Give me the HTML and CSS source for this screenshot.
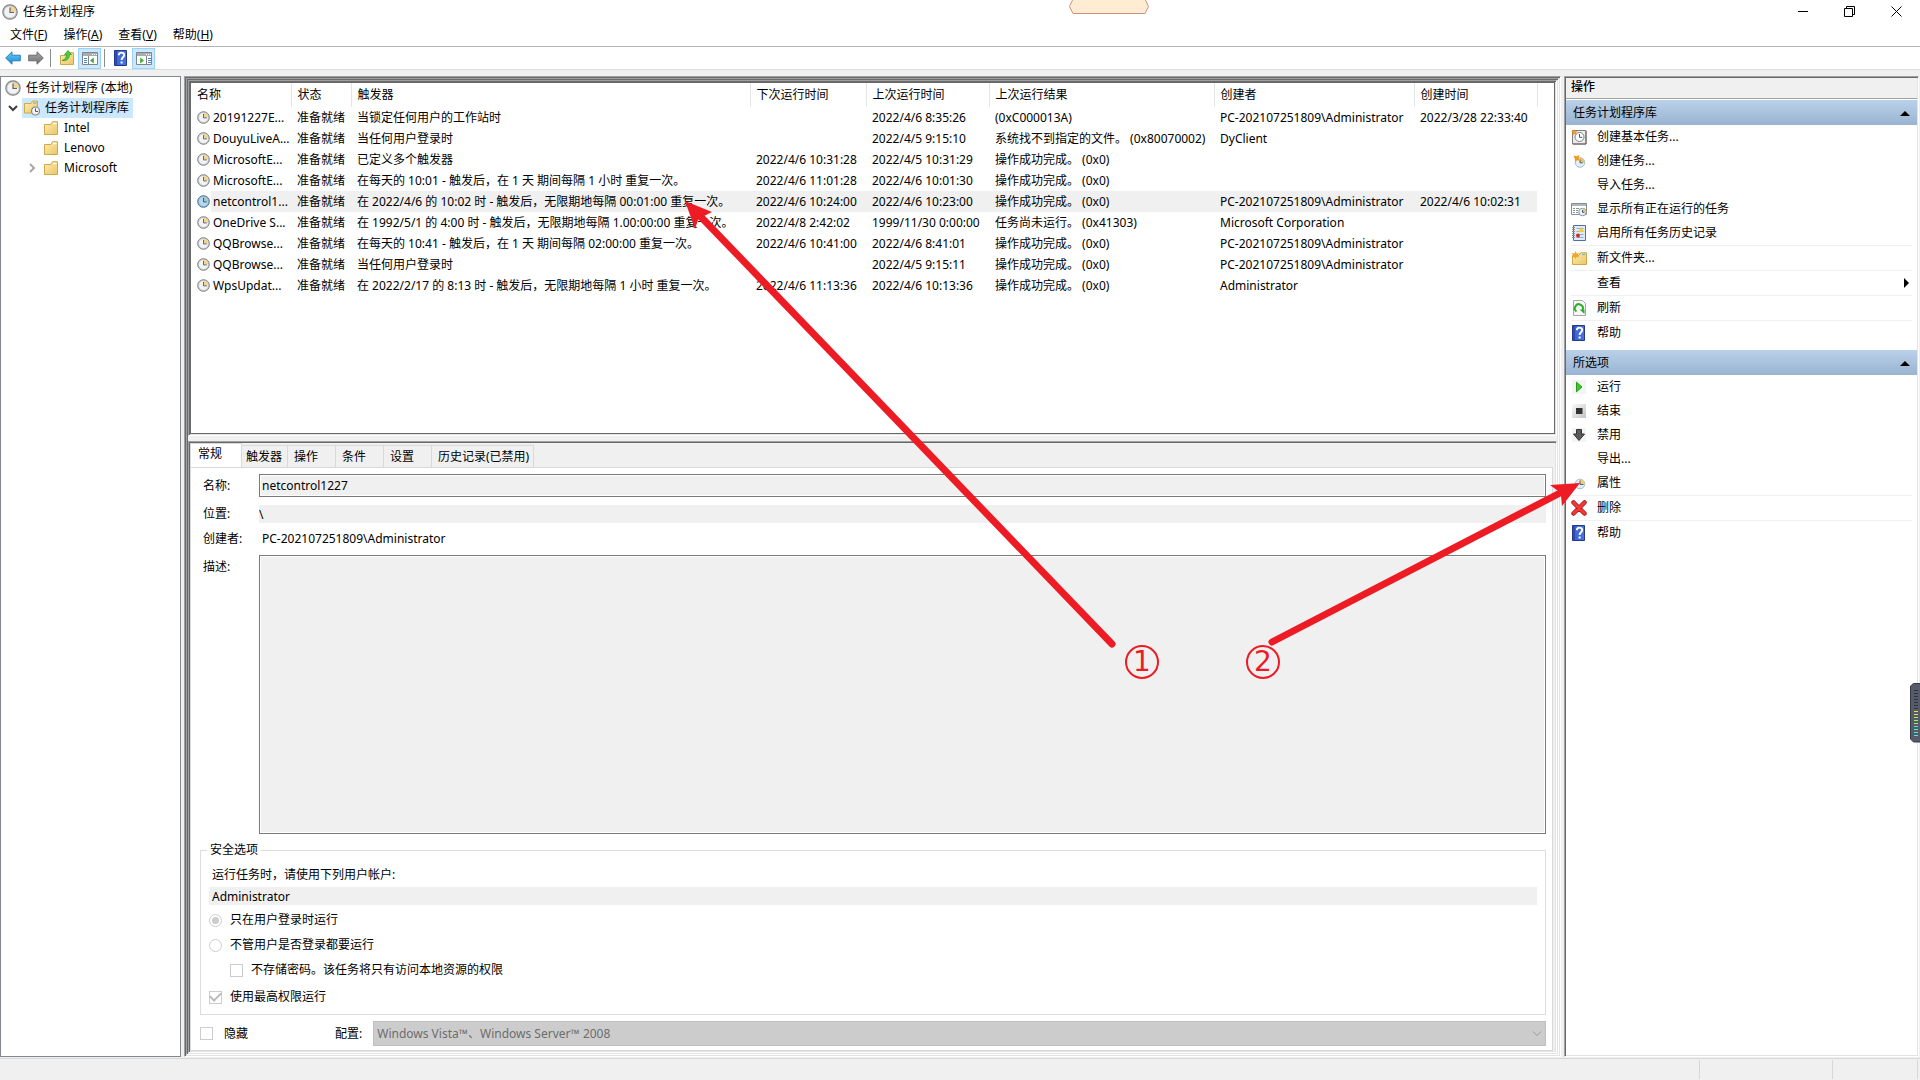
FILE: index.html
```html
<!DOCTYPE html>
<html lang="zh-CN">
<head>
<meta charset="utf-8">
<title>任务计划程序</title>
<link rel="stylesheet" href="styles.css">
</head>
<body>
<svg class="sprite" aria-hidden="true">
  <defs>
    <linearGradient id="gFolder" x1="0" y1="0" x2="1" y2="1"><stop offset="0" stop-color="#ffeeb0"/><stop offset="1" stop-color="#e9c56a"/></linearGradient>
    <linearGradient id="gBook" x1="0" y1="0" x2="1" y2="0"><stop offset="0" stop-color="#2443a8"/><stop offset=".25" stop-color="#3f66d4"/><stop offset="1" stop-color="#4a74dc"/></linearGradient>
    <linearGradient id="gBack" x1="0" y1="0" x2="0" y2="1"><stop offset="0" stop-color="#6fd0fa"/><stop offset="1" stop-color="#1487d6"/></linearGradient>
    <linearGradient id="gFwd" x1="0" y1="0" x2="0" y2="1"><stop offset="0" stop-color="#a8a8a8"/><stop offset="1" stop-color="#707070"/></linearGradient>
    <linearGradient id="gStop" x1="0" y1="0" x2="1" y2="1"><stop offset="0" stop-color="#fafafa"/><stop offset="1" stop-color="#c4c4c4"/></linearGradient>
  </defs>
  <symbol id="clock" viewBox="0 0 16 16"><circle cx="8" cy="8" r="7.2" fill="#c9c9c9" stroke="#858585" stroke-width="1.2"/><circle cx="8" cy="8" r="5.6" fill="#f1f4f7"/><path d="M8 8V2.4A5.6 5.6 0 0 1 13.6 8z" fill="#f3d48a"/><path d="M8 3.6V8.5H12" fill="none" stroke="#5c6570" stroke-width="1.2"/></symbol>
  <symbol id="clock-blue" viewBox="0 0 16 16"><circle cx="8" cy="8" r="7.2" fill="#8fb4d2" stroke="#557795" stroke-width="1.2"/><circle cx="8" cy="8" r="5.6" fill="#b5d9f2"/><path d="M8 8V2.4A5.6 5.6 0 0 1 13.6 8z" fill="#a9c7bd"/><path d="M8 3.6V8.5H12" fill="none" stroke="#2c5c83" stroke-width="1.2"/></symbol>
  <symbol id="folder" viewBox="0 0 16 16"><path d="M1.5 4.5H8l1.5-2.8h5v12.8h-13z" fill="url(#gFolder)" stroke="#d0a848"/><path d="M10 3.5h3.5" stroke="#fff" stroke-width="1.4"/></symbol>
  <symbol id="folder-clock" viewBox="0 0 16 16"><path d="M.5 3.5H7L8.500 1h5v12H.5z" fill="url(#gFolder)" stroke="#d0a848"/><path d="M9 3h3.500" stroke="#68b5e8" stroke-width="1.2"/><circle cx="11.500" cy="11" r="4" fill="#f3f3f3" stroke="#858585" stroke-width="1.2"/><path d="M11.500 8.500v3H14" fill="none" stroke="#556"/></symbol>
  <symbol id="folder-up" viewBox="0 0 16 16"><path d="M1.500 5.500H9l1.500-2.800h4v11.800h-13z" fill="url(#gFolder)" stroke="#d0a848"/><path d="M3 10.500C6.500 9.500 7.500 7 7.500 4.500H5.500L9 .5l3.500 4h-2C10.500 8.500 7.500 11.500 3 10.500z" fill="#4ecb3a" stroke="#2a9a20" stroke-width=".7"/></symbol>
  <symbol id="folder-new" viewBox="0 0 16 16"><path d="M1.500 5.500H8l1.500-2.800h6v11.800h-14z" fill="url(#gFolder)" stroke="#d0a848"/><path d="M11 4.500h3" stroke="#68b5e8" stroke-width="1.200"/><path d="M4.500 1l1.200 2.500L8.500 3 6.500 5.200 8.500 7.500 5.500 7 4.500 9.500 3.500 7 .5 7.500l2-2.300L.5 3l3 .5z" fill="#f7a51c"/></symbol>
  <symbol id="back" viewBox="0 0 16 16"><path d="M.7 8 7 1.800V5.200h8.300v5.600H7v3.400z" fill="url(#gBack)" stroke="#2c7eb8"/></symbol>
  <symbol id="forward" viewBox="0 0 16 16"><path d="M15.300 8 9 1.800V5.200H.7v5.600H9v3.400z" fill="url(#gFwd)" stroke="#6a6a6a"/></symbol>
  <symbol id="help" viewBox="0 0 16 16"><path d="M1.500.5h12v15h-12z" fill="url(#gBook)" stroke="#24388a"/><path d="M3.500.5v15" stroke="#2a48b0"/><path d="M5.800 5.200C5.800 1.700 11.200 1.800 11.200 5 11.200 7.300 8.600 7.300 8.600 10" fill="none" stroke="#fff" stroke-width="1.900"/><path d="M7.600 11.500h2v2h-2z" fill="#fff"/></symbol>
  <symbol id="pane-left" viewBox="0 0 16 16"><path d="M.5 2.500h15v12H.5z" fill="#fff" stroke="#7e858c"/><path d="M1 3h14v3H1z" fill="#a7adb3"/><path d="M10 4.500h1m1 0h1m1 0h1" stroke="#fff"/><path d="M6.500 6v8" stroke="#7e858c"/><path d="M2 8.500h3m-3 2h3m-3 2h3" stroke="#4f82c4"/><path d="M11.800 7.500v6L8 10.500z" fill="#3fae2a"/></symbol>
  <symbol id="pane-right" viewBox="0 0 16 16"><path d="M.5 2.500h15v12H.5z" fill="#fff" stroke="#7e858c"/><path d="M1 3h14v3H1z" fill="#a7adb3"/><path d="M10 4.500h1m1 0h1m1 0h1" stroke="#fff"/><path d="M10.500 6v8" stroke="#7e858c"/><path d="M12 8.500h3m-3 2h3m-3 2h3" stroke="#4f82c4"/><path d="M4.200 7.500v6L8 10.500z" fill="#3fae2a"/></symbol>
  <symbol id="task-basic" viewBox="0 0 16 16"><path d="M1.500 1.500h13.500v13.500H1.500z" fill="#ececec" stroke="#8a7d7d"/><path d="M15 2v13H2" fill="none" stroke="#6b5f5f"/><circle cx="8.500" cy="8" r="4.500" fill="#fff" stroke="#6d8796"/><path d="M8.500 5v3.300h2.800" fill="none" stroke="#46586a"/><path d="M3 0l.8 2.200L6.500 2 4.800 4 6 6 3.500 5 1.500 6.500 2 4 0 2.500l2.300-.2z" fill="#f59a14"/></symbol>
  <symbol id="task-new" viewBox="0 0 16 16"><circle cx="9" cy="9.500" r="4.800" fill="#e3edf5" stroke="#a4bccb"/><path d="M9 9.500V4.700a4.800 4.800 0 0 1 4.800 4.800z" fill="#eebf72"/><path d="M9 6.500v3.300h2.800" fill="none" stroke="#45637a"/><path d="M2.500 2.500l3 .8L8.500 2 7.500 5 9 7.500 6 7.200 4 9.500 4 6.500z" fill="#f59a14"/></symbol>
  <symbol id="task-running" viewBox="0 0 16 16"><path d="M.5 2.500h15v11H.5z" fill="#fff" stroke="#858c92"/><path d="M1 3h14v2H1z" fill="#b0b6bc"/><path d="M2 7.500h2m1 0h3M2 9.500h2m1 0h2M2 11.500h2m1 0h2" stroke="#8b939b"/><circle cx="11.500" cy="11" r="3.800" fill="#e7eff5" stroke="#7f95a5"/><path d="M11.500 11V7.500A3.500 3.500 0 0 1 15 11z" fill="#f1cb78"/><path d="M11.500 9v2.300h2" fill="none" stroke="#45586a"/></symbol>
  <symbol id="history" viewBox="0 0 16 16"><path d="M2.500.5h12v15h-12z" fill="#dfeaf8" stroke="#4f6fa8"/><path d="M1 2.500h3m-3 2h3m-3 2h3m-3 2h3m-3 2h3m-3 2h3" stroke="#8c8c8c"/><path d="M5.500 3.500h7m-7 3h7m-7 3h7m-7 3h7" stroke="#8daedb"/><path d="M10 2l3.500 5h-6z" fill="#f5cf25"/><circle cx="7" cy="10.500" r="2" fill="#dd2b25"/></symbol>
  <symbol id="refresh" viewBox="0 0 16 16"><path d="M2.500.5h9l3 3v12h-12z" fill="#f8f8f8" stroke="#a5a5a5"/><path d="M5.500 11.500A4 4 0 1 1 11.500 10" fill="none" stroke="#2fae2c" stroke-width="2"/><path d="M8.500 9.500h5v4.500z" fill="#2fae2c"/></symbol>
  <symbol id="run" viewBox="0 0 16 16"><path d="M1 1h14v14H1z" fill="#f4f4f4"/><path d="M5.500 3.200v9.600L11 8z" fill="#3ccc2a" stroke="#259c18"/></symbol>
  <symbol id="end" viewBox="0 0 16 16"><path d="M1 1h14v14H1z" fill="url(#gStop)"/><path d="M5 5h6.500v6H5z" fill="#333"/></symbol>
  <symbol id="disable" viewBox="0 0 16 16"><path d="M1 1h14v14H1z" fill="#f4f4f4"/><path d="M5.500 2.500h5v4.500h3L8 13.500 2.500 7h3z" fill="#5a5a5a" stroke="#333"/></symbol>
  <symbol id="props" viewBox="0 0 16 16"><circle cx="9" cy="9" r="4.800" fill="#e3edf5" stroke="#a4bccb"/><path d="M9 9V4.200A4.800 4.800 0 0 1 13.800 9z" fill="#f1cb78"/><path d="M9 5.500V9.500h3.500" fill="none" stroke="#45637a"/></symbol>
  <symbol id="delete" viewBox="0 0 16 16"><path d="M2.500 2.500l11 11m0-11l-11 11" stroke="#b5161a" stroke-width="4.500" stroke-linecap="round"/><path d="M2.700 2.700l10.600 10.600m0-10.600L2.700 13.300" stroke="#ee3a38" stroke-width="3" stroke-linecap="round"/></symbol>
</svg>

<header class="titlebar">
  <svg class="icon"><use href="#clock"/></svg>
  <h1 class="title">任务计划程序</h1>
  <div class="window-buttons">
    <button class="window-button" aria-label="最小化"><svg width="11" height="11"><path d="M0 5.500h10" stroke="#000"/></svg></button>
    <button class="window-button" aria-label="还原"><svg width="11" height="11"><path d="M.5 2.500h8v8h-8zM2.500 2.500v-2h8v8h-2" fill="none" stroke="#000"/></svg></button>
    <button class="window-button" aria-label="关闭"><svg width="11" height="11"><path d="M.5.5l10 10m0-10l-10 10" stroke="#000"/></svg></button>
  </div>
  <svg class="notch" width="80" height="15" aria-hidden="true"><path d="M4-1h72l3.500 7.500L76 13.500H4L.5 6.500z" fill="#ffecd2" stroke="#c8937a"/></svg>
</header>

<nav class="menubar">
  <button>文件(<u>F</u>)</button>
  <button>操作(<u>A</u>)</button>
  <button>查看(<u>V</u>)</button>
  <button>帮助(<u>H</u>)</button>
</nav>

<div class="toolbar">
  <button aria-label="后退"><svg class="icon"><use href="#back"/></svg></button>
  <button aria-label="前进"><svg class="icon"><use href="#forward"/></svg></button>
  <span class="divider"></span>
  <button aria-label="上一级"><svg class="icon"><use href="#folder-up"/></svg></button>
  <button class="pressed" aria-label="显示/隐藏控制台树"><svg class="icon"><use href="#pane-left"/></svg></button>
  <span class="divider"></span>
  <button aria-label="帮助"><svg class="icon"><use href="#help"/></svg></button>
  <button class="pressed" aria-label="显示/隐藏操作窗格"><svg class="icon"><use href="#pane-right"/></svg></button>
</div>

<main class="workspace">
  <nav class="tree">
    <button class="node root"><svg class="icon"><use href="#clock"/></svg>任务计划程序 (本地)</button>
    <div class="branch">
      <svg class="twist" width="10" height="10"><path d="M1 3l4 4 4-4" fill="none" stroke="#404040" stroke-width="2"/></svg>
      <button class="node selected"><svg class="icon"><use href="#folder-clock"/></svg>任务计划程序库</button>
    </div>
    <div class="branch leaf"><span class="twist"></span><button class="node"><svg class="icon"><use href="#folder"/></svg>Intel</button></div>
    <div class="branch leaf"><span class="twist"></span><button class="node"><svg class="icon"><use href="#folder"/></svg>Lenovo</button></div>
    <div class="branch leaf"><svg class="twist" width="10" height="10"><path d="M3 1l4 4-4 4" fill="none" stroke="#a6a6a6" stroke-width="2"/></svg><button class="node"><svg class="icon"><use href="#folder"/></svg>Microsoft</button></div>
  </nav>

  <div class="sunken"><div class="sunken center">
    <section class="sunken list-frame"><div class="list">
      <table class="tasks">
        <colgroup><col class="c-name"><col class="c-state"><col class="c-trigger"><col class="c-next"><col class="c-last"><col class="c-result"><col class="c-author"><col class="c-created"></colgroup>
        <thead><tr><th>名称</th><th>状态</th><th>触发器</th><th>下次运行时间</th><th>上次运行时间</th><th>上次运行结果</th><th>创建者</th><th>创建时间</th></tr></thead>
        <tbody>
          <tr><td><span class="name"><svg class="small-icon"><use href="#clock"/></svg>20191227E...</span></td><td>准备就绪</td><td>当锁定任何用户的工作站时</td><td></td><td>2022/4/6 8:35:26</td><td>(0xC000013A)</td><td>PC-202107251809\Administrator</td><td>2022/3/28 22:33:40</td></tr>
          <tr><td><span class="name"><svg class="small-icon"><use href="#clock"/></svg>DouyuLiveA...</span></td><td>准备就绪</td><td>当任何用户登录时</td><td></td><td>2022/4/5 9:15:10</td><td>系统找不到指定的文件。 (0x80070002)</td><td>DyClient</td><td></td></tr>
          <tr><td><span class="name"><svg class="small-icon"><use href="#clock"/></svg>MicrosoftE...</span></td><td>准备就绪</td><td>已定义多个触发器</td><td>2022/4/6 10:31:28</td><td>2022/4/5 10:31:29</td><td>操作成功完成。 (0x0)</td><td></td><td></td></tr>
          <tr><td><span class="name"><svg class="small-icon"><use href="#clock"/></svg>MicrosoftE...</span></td><td>准备就绪</td><td>在每天的 10:01 - 触发后，在 1 天 期间每隔 1 小时 重复一次。</td><td>2022/4/6 11:01:28</td><td>2022/4/6 10:01:30</td><td>操作成功完成。 (0x0)</td><td></td><td></td></tr>
          <tr class="current"><td><span class="name"><svg class="small-icon"><use href="#clock-blue"/></svg>netcontrol1...</span></td><td>准备就绪</td><td>在 2022/4/6 的 10:02 时 - 触发后，无限期地每隔 00:01:00 重复一次。</td><td>2022/4/6 10:24:00</td><td>2022/4/6 10:23:00</td><td>操作成功完成。 (0x0)</td><td>PC-202107251809\Administrator</td><td>2022/4/6 10:02:31</td></tr>
          <tr><td><span class="name"><svg class="small-icon"><use href="#clock"/></svg>OneDrive S...</span></td><td>准备就绪</td><td>在 1992/5/1 的 4:00 时 - 触发后，无限期地每隔 1.00:00:00 重复一次。</td><td>2022/4/8 2:42:02</td><td>1999/11/30 0:00:00</td><td>任务尚未运行。 (0x41303)</td><td>Microsoft Corporation</td><td></td></tr>
          <tr><td><span class="name"><svg class="small-icon"><use href="#clock"/></svg>QQBrowse...</span></td><td>准备就绪</td><td>在每天的 10:41 - 触发后，在 1 天 期间每隔 02:00:00 重复一次。</td><td>2022/4/6 10:41:00</td><td>2022/4/6 8:41:01</td><td>操作成功完成。 (0x0)</td><td>PC-202107251809\Administrator</td><td></td></tr>
          <tr><td><span class="name"><svg class="small-icon"><use href="#clock"/></svg>QQBrowse...</span></td><td>准备就绪</td><td>当任何用户登录时</td><td></td><td>2022/4/5 9:15:11</td><td>操作成功完成。 (0x0)</td><td>PC-202107251809\Administrator</td><td></td></tr>
          <tr><td><span class="name"><svg class="small-icon"><use href="#clock"/></svg>WpsUpdat...</span></td><td>准备就绪</td><td>在 2022/2/17 的 8:13 时 - 触发后，无限期地每隔 1 小时 重复一次。</td><td>2022/4/6 11:13:36</td><td>2022/4/6 10:13:36</td><td>操作成功完成。 (0x0)</td><td>Administrator</td><td></td></tr>
        </tbody>
      </table>
    </div></section>

    <section class="sunken details">
      <div class="tabs" role="tablist">
        <button class="tab active" role="tab">常规</button>
        <button class="tab" role="tab">触发器</button>
        <button class="tab" role="tab">操作</button>
        <button class="tab" role="tab">条件</button>
        <button class="tab" role="tab">设置</button>
        <button class="tab" role="tab">历史记录(已禁用)</button>
      </div>
      <form class="page">
        <div class="fields">
          <label for="task-name">名称:</label><input id="task-name" class="boxed" type="text" value="netcontrol1227" readonly>
          <label for="task-path">位置:</label><input id="task-path" class="flat path" type="text" value="\" readonly>
          <span>创建者:</span><span class="author">PC-202107251809\Administrator</span>
          <label for="task-desc">描述:</label><textarea id="task-desc" class="boxed" readonly></textarea>
        </div>
        <fieldset class="security">
          <legend>安全选项</legend>
          <label for="account" class="account-label">运行任务时，请使用下列用户帐户:</label>
          <input id="account" class="flat account" type="text" value="Administrator" readonly>
          <label class="option"><input type="radio" name="logon" checked disabled>只在用户登录时运行</label>
          <label class="option"><input type="radio" name="logon" disabled>不管用户是否登录都要运行</label>
          <label class="option nested"><input type="checkbox" disabled>不存储密码。该任务将只有访问本地资源的权限</label>
          <label class="option last"><input type="checkbox" checked disabled>使用最高权限运行</label>
        </fieldset>
        <div class="footer-row">
          <label class="option hide"><input type="checkbox" disabled>隐藏</label>
          <label for="config">配置:</label>
          <div class="select-wrap">
            <select id="config" disabled><option>Windows Vista™、Windows Server™ 2008</option></select>
            <svg class="select-arrow" width="10" height="6"><path d="M1 .5l4 4 4-4" fill="none" stroke="#999"/></svg>
          </div>
        </div>
      </form>
    </section>
  </div></div>

  <aside class="sunken actions">
    <h2 class="actions-title">操作</h2>
    <button class="group">任务计划程序库<svg width="10" height="6"><path d="M0 6l5-5 5 5z"/></svg></button>
    <ul class="items">
      <li><button><svg class="icon"><use href="#task-basic"/></svg>创建基本任务...</button></li>
      <li><button><svg class="icon"><use href="#task-new"/></svg>创建任务...</button></li>
      <li><button><span class="icon"></span>导入任务...</button></li>
      <li><button><svg class="icon"><use href="#task-running"/></svg>显示所有正在运行的任务</button></li>
      <li class="ruled"><button><svg class="icon"><use href="#history"/></svg>启用所有任务历史记录</button></li>
      <li class="ruled"><button><svg class="icon"><use href="#folder-new"/></svg>新文件夹...</button></li>
      <li class="ruled"><button><span class="icon"></span>查看<svg class="more" width="5" height="10"><path d="M0 0l5 5-5 5z"/></svg></button></li>
      <li class="ruled"><button><svg class="icon"><use href="#refresh"/></svg>刷新</button></li>
      <li><button><svg class="icon"><use href="#help"/></svg>帮助</button></li>
    </ul>
    <button class="group">所选项<svg width="10" height="6"><path d="M0 6l5-5 5 5z"/></svg></button>
    <ul class="items">
      <li><button><svg class="icon"><use href="#run"/></svg>运行</button></li>
      <li><button><svg class="icon"><use href="#end"/></svg>结束</button></li>
      <li><button><svg class="icon"><use href="#disable"/></svg>禁用</button></li>
      <li><button><span class="icon"></span>导出...</button></li>
      <li class="ruled"><button><svg class="icon"><use href="#props"/></svg>属性</button></li>
      <li class="ruled"><button><svg class="icon"><use href="#delete"/></svg>删除</button></li>
      <li><button><svg class="icon"><use href="#help"/></svg>帮助</button></li>
    </ul>
  </aside>
</main>

<footer class="statusbar"><span></span><span class="cell-wide"></span><span class="cell-narrow"></span></footer>

<svg class="arrows" width="1920" height="1080" aria-hidden="true">
  <g stroke="#ed1c24" stroke-width="7" stroke-linecap="round" fill="#ed1c24">
    <path d="M1112 644L702 218M1272 642L1560 493"/>
    <path d="M685 201l27 11-10 5-4 3-3 9zM1580 483l-30 2 8 6 3 5 1 10z" stroke="none"/>
  </g>
</svg>
<span class="mark mark-one">1</span>
<span class="mark mark-two">2</span>

<svg class="meter" width="10" height="60" aria-hidden="true">
  <path d="M10.500.5H3.500L.5 3v53l3 3h7z" fill="#555b6b" stroke="#343946"/>
  <path d="M6 7v20" stroke="#30343f" stroke-width="4" stroke-dasharray="1 2"/>
  <path d="M6 28v8" stroke="#f0dc3c" stroke-width="4" stroke-dasharray="1 2"/>
  <path d="M6 34v10" stroke="#a9ea55" stroke-width="4" stroke-dasharray="1 2"/>
  <path d="M6 43v10" stroke="#4fe8c4" stroke-width="4" stroke-dasharray="1 2"/>
</svg>
</body>
</html>
```

FILE: styles.css
```css
* { box-sizing: border-box; }

html { height: 100%; }

body {
  position: relative;
  display: flex;
  flex-direction: column;
  min-height: 100%;
  margin: 0;
  overflow: hidden;
  background: #f0f0f0;
  color: #000;
  font: 12px/16px "Noto Sans", "Noto Sans CJK SC", sans-serif;
}

button, input, textarea, select {
  margin: 0;
  padding: 0;
  border: 0;
  border-radius: 0;
  background: none;
  color: inherit;
  font: inherit;
  text-align: left;
  outline: none;
}

.sprite { position: absolute; width: 0; height: 0; }
.icon { flex: none; width: 16px; height: 16px; }
.small-icon { flex: none; width: 13px; height: 13px; }

/* Title bar */
.titlebar {
  position: relative;
  display: flex;
  align-items: center;
  gap: 5px;
  height: 23px;
  padding-left: 2px;
  background: #fff;
}
.title { margin: 0; font-size: 12px; font-weight: 400; }
.window-buttons { display: flex; margin-left: auto; }
.window-button {
  display: flex;
  align-items: center;
  justify-content: center;
  width: 46px;
  height: 21px;
}
.window-button:last-child { width: 48px; }
.notch { position: absolute; top: 0; left: 1069px; }

/* Menu and toolbar */
.menubar {
  display: flex;
  gap: 16px;
  height: 24px;
  padding: 0 10px;
  border-bottom: 1px solid #b4b4b4;
  background: #fff;
}
.toolbar {
  display: flex;
  align-items: center;
  height: 23px;
  padding-left: 1px;
  border-bottom: 1px solid #dcdcdc;
  background: #fff;
}
.toolbar button {
  display: flex;
  align-items: center;
  justify-content: center;
  width: 23px;
  height: 21px;
}
.toolbar .pressed { border: 1px solid #99d1ff; background: #cce8ff; }
.divider { width: 1px; height: 18px; margin: 0 4px 0 3px; background: #8c8c8c; }

/* Workspace */
.workspace {
  display: grid;
  flex: 1;
  grid-template-columns: 181px minmax(0, 1fr) 355px;
  gap: 3px;
  padding: 6px 1px 1px 0;
}
.sunken {
  padding: 1px;
  border: 1px solid;
  border-color: #a0a0a0 #fff #fff #a0a0a0;
  box-shadow: inset 1px 1px #696969, inset -1px -1px #e3e3e3;
}

/* Tree */
.tree {
  padding: 1px 0 0;
  border: 1px solid #828790;
  background: #fff;
}
.branch { display: flex; align-items: center; padding-left: 7px; }
.branch.leaf { padding-left: 26px; }
.twist { flex: none; width: 10px; height: 10px; margin-right: 4px; }
.node {
  display: flex;
  align-items: center;
  gap: 5px;
  height: 20px;
  padding: 0 4px 0 2px;
}
.node.root { padding-left: 4px; }
.node.selected { background: #cce8ff; }

/* Task list */
.center {
  display: flex;
  flex-direction: column;
  gap: 5px;
  height: 100%;
}
.list-frame { flex: 0 0 356px; }
.list { height: 100%; border: 1px solid #696969; background: #fff; overflow: hidden; }
.tasks { table-layout: fixed; width: 1346px; border-collapse: collapse; }
.c-name { width: 100px; }
.c-state { width: 60px; }
.c-trigger { width: 399px; }
.c-next { width: 116px; }
.c-last { width: 123px; }
.c-result { width: 225px; }
.c-author { width: 200px; }
.c-created { width: 123px; }
.tasks th, .tasks td {
  padding: 0 0 0 6px;
  font-weight: 400;
  text-align: left;
  white-space: nowrap;
}
.tasks th { height: 24px; border-right: 1px solid #e5e5e5; }
.tasks td { height: 21px; }
.name { display: flex; align-items: center; gap: 3px; }
.current td { background: #f0f0f0; }
.current td:first-child { background: linear-gradient(90deg, #fff 20px, #f0f0f0 20px); }

/* Detail tabs */
.details {
  display: flex;
  flex: 1;
  flex-direction: column;
  padding-right: 3px;
}
.tabs { display: flex; align-items: flex-end; height: 25px; margin-bottom: -1px; }
.tab {
  height: 23px;
  min-width: 48px;
  padding: 0 4px 0 6px;
  border: 1px solid #d9d9d9;
  border-left: 0;
}
.tab.active {
  height: 25px;
  min-width: 52px;
  padding: 0 0 3px 7px;
  border-left: 1px solid #d9d9d9;
  border-bottom-color: #fff;
  background: #fff;
}
.tab:nth-child(2) { min-width: 46px; padding-left: 4px; }
.page {
  display: flex;
  flex: 1;
  flex-direction: column;
  padding: 6px 6px 4px 9px;
  border: 1px solid #d9d9d9;
  background: #fff;
}
.fields {
  display: grid;
  flex: 1;
  grid-template-columns: 48px minmax(0, 1fr);
  grid-template-rows: auto auto auto 1fr;
  gap: 8px;
  padding-left: 3px;
}
.fields > label, .fields > span { align-self: center; }
.fields > label:last-of-type { align-self: start; padding-top: 4px; }
.fields .author { padding-left: 3px; }
.boxed {
  width: 100%;
  height: 23px;
  padding: 0 2px;
  border: 1px solid #7a7a7a;
  background: #f0f0f0;
  box-shadow: inset 0 0 0 1px #fff;
}
textarea.boxed { height: auto; resize: none; }
.flat { width: 100%; height: 18px; background: #f0f0f0; }

/* Security options */
.security {
  display: flex;
  flex-direction: column;
  min-width: 0;
  margin: 8px 0 0;
  padding: 9px 8px;
  border: 1px solid #dcdcdc;
}
.security legend { margin-left: -2px; padding: 0 3px; }
.account-label { padding-left: 3px; }
.account { margin: 4px 0 7px; padding-left: 3px; }
.option { display: flex; align-items: center; gap: 8px; }
.security .option + .option { margin-top: 9px; }
.security .nested { padding-left: 21px; }
.option input {
  display: grid;
  flex: none;
  place-items: center;
  width: 13px;
  height: 13px;
  appearance: none;
  border: 1px solid #ccc;
  background: #fff;
}
.option input[type="radio"] { border-radius: 50%; }
.option input[type="radio"]:checked::before {
  content: "";
  width: 7px;
  height: 7px;
  border-radius: 50%;
  background: #ccc;
}
.option input[type="checkbox"]:checked::before {
  content: "";
  width: 9px;
  height: 5px;
  margin-bottom: 3px;
  border: solid #bbb;
  border-width: 0 0 2px 2px;
  transform: rotate(-45deg);
}
.security .option.last { margin-top: 11px; }
.footer-row { display: flex; align-items: center; margin-top: 6px; }
.footer-row .hide { width: 135px; gap: 11px; }
.select-wrap { position: relative; flex: 1; margin-left: 11px; }
.select-wrap select {
  display: block;
  width: 100%;
  height: 25px;
  padding: 0 3px;
  appearance: none;
  border: 1px solid #bfbfbf;
  background: #ccc;
  color: #6d6d6d;
  opacity: 1;
}
.select-arrow { position: absolute; top: 10px; right: 4px; }

/* Actions pane */
.actions { background: #fff; }
.actions-title {
  height: 21px;
  margin: 0 0 1px;
  padding: 1px 5px;
  border-bottom: 1px solid #a0a0a0;
  background: #f0f0f0;
  font-size: 12px;
  font-weight: 500;
}
.group {
  display: flex;
  align-items: center;
  justify-content: space-between;
  width: 100%;
  height: 25px;
  padding: 0 7px;
  background: linear-gradient(#bad1ea, #99b4d1);
}
.items { margin: 0 5px 5px; padding: 0; list-style: none; }
.items button {
  display: flex;
  align-items: center;
  gap: 10px;
  width: 100%;
  height: 24px;
}
.items .ruled { border-bottom: 1px solid #f0f0f0; }
.more { margin: 0 3px 0 auto; }

/* Status bar */
.statusbar {
  display: flex;
  height: 22px;
  padding: 1px 2px 1px 0;
  border-top: 1px solid #d7d7d7;
}
.statusbar span { flex: 1; border-right: 1px solid #d7d7d7; }
.statusbar .cell-wide { flex: 0 0 133px; }
.statusbar .cell-narrow { flex: 0 0 85px; }

/* Annotations over the window */
.arrows { position: absolute; top: 0; left: 0; pointer-events: none; }
.mark {
  position: absolute;
  top: 645px;
  width: 34px;
  height: 34px;
  border: 2px solid #ed1c24;
  border-radius: 50%;
  color: #ed1c24;
  font: 28px/30px "DejaVu Sans", sans-serif;
  text-align: center;
}
.mark-one { left: 1125px; }
.mark-two { left: 1246px; }
.meter { position: absolute; top: 683px; right: 0; }
```
